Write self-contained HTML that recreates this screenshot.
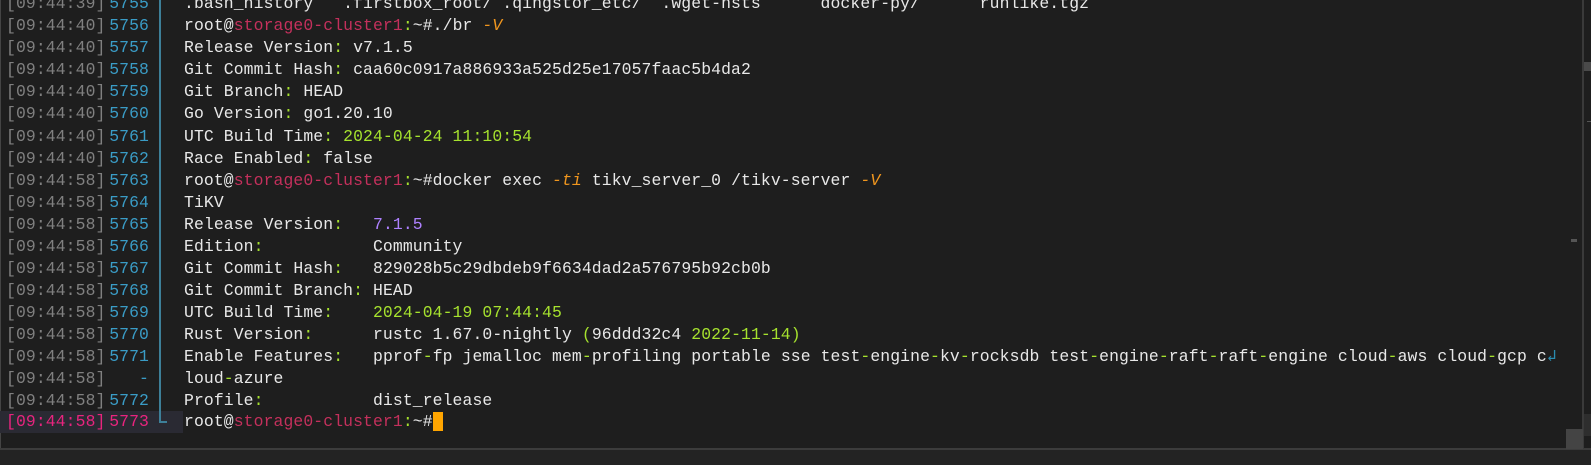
<!DOCTYPE html>
<html><head><meta charset="utf-8"><style>
html,body{margin:0;padding:0;}
body{width:1591px;height:465px;background:#1e1e1e;position:relative;overflow:hidden;font-family:"Liberation Mono",monospace;font-size:16.4px;letter-spacing:0.11px;color:#e8e8e8;}
.r{position:absolute;left:0;height:22px;line-height:22px;white-space:pre;width:1560px;}
.ts{position:absolute;left:6px;color:#808080;}
.n{position:absolute;left:100px;width:49px;text-align:right;color:#3a9cc6;}
.t{position:absolute;left:184px;}
.h{color:#c4305c}.g{color:#a6e22e}.o{color:#f0961e;font-style:italic}.p{color:#ae81ff}
.cur .ts,.cur .n{color:#e8247e}
</style></head><body>
<div style="position:absolute;left:0;top:0;width:1px;height:449px;background:#444"></div>
<div style="position:absolute;left:0;top:448px;width:1591px;height:2px;background:#3c3c3c"></div>
<div style="position:absolute;left:0;top:450px;width:1591px;height:15px;background:#232323"></div>
<div style="position:absolute;left:1582px;top:0;width:2px;height:449px;background:#3a3a3a"></div>
<div style="position:absolute;left:1584px;top:62px;width:7px;height:9px;background:#4a4a4a"></div>
<div style="position:absolute;left:1587px;top:121px;width:4px;height:1px;background:#555"></div>
<div style="position:absolute;left:1571px;top:239px;width:6px;height:3px;background:#555"></div>
<div style="position:absolute;left:1566px;top:429px;width:17px;height:20px;background:#444"></div>
<div style="position:absolute;left:1584px;top:414px;width:7px;height:22px;background:#2e2e2e"></div>
<div style="position:absolute;left:0;top:411px;width:183px;height:22px;background:#2a2a33"></div>
<div style="position:absolute;left:159px;top:0;width:2px;height:423px;background:#3d7f98"></div>
<div style="position:absolute;left:159px;top:421px;width:8px;height:2px;background:#3d7f98"></div>

<div class="r" style="top:-7px"><span class="ts">[09:44:39]</span><span class="n">5755</span><span class="t">.bash_history   .firstbox_root/ .qingstor_etc/  .wget-hsts      docker-py/      runlike.tgz</span></div>
<div class="r" style="top:15px"><span class="ts">[09:44:40]</span><span class="n">5756</span><span class="t">root@<span class="h">storage0-cluster1</span><span class="g">:</span>~#./br <span class="o">-V</span></span></div>
<div class="r" style="top:37px"><span class="ts">[09:44:40]</span><span class="n">5757</span><span class="t">Release Version<span class="g">:</span> v7.1.5</span></div>
<div class="r" style="top:59px"><span class="ts">[09:44:40]</span><span class="n">5758</span><span class="t">Git Commit Hash<span class="g">:</span> caa60c0917a886933a525d25e17057faac5b4da2</span></div>
<div class="r" style="top:81px"><span class="ts">[09:44:40]</span><span class="n">5759</span><span class="t">Git Branch<span class="g">:</span> HEAD</span></div>
<div class="r" style="top:103px"><span class="ts">[09:44:40]</span><span class="n">5760</span><span class="t">Go Version<span class="g">:</span> go1.20.10</span></div>
<div class="r" style="top:126px"><span class="ts">[09:44:40]</span><span class="n">5761</span><span class="t">UTC Build Time<span class="g">: 2024-04-24 11:10:54</span></span></div>
<div class="r" style="top:148px"><span class="ts">[09:44:40]</span><span class="n">5762</span><span class="t">Race Enabled<span class="g">:</span> false</span></div>
<div class="r" style="top:170px"><span class="ts">[09:44:58]</span><span class="n">5763</span><span class="t">root@<span class="h">storage0-cluster1</span><span class="g">:</span>~#docker exec <span class="o">-ti</span> tikv_server_0 /tikv-server <span class="o">-V</span></span></div>
<div class="r" style="top:192px"><span class="ts">[09:44:58]</span><span class="n">5764</span><span class="t">TiKV</span></div>
<div class="r" style="top:214px"><span class="ts">[09:44:58]</span><span class="n">5765</span><span class="t">Release Version<span class="g">:</span>   <span class="p">7.1.5</span></span></div>
<div class="r" style="top:236px"><span class="ts">[09:44:58]</span><span class="n">5766</span><span class="t">Edition<span class="g">:</span>           Community</span></div>
<div class="r" style="top:258px"><span class="ts">[09:44:58]</span><span class="n">5767</span><span class="t">Git Commit Hash<span class="g">:</span>   829028b5c29dbdeb9f6634dad2a576795b92cb0b</span></div>
<div class="r" style="top:280px"><span class="ts">[09:44:58]</span><span class="n">5768</span><span class="t">Git Commit Branch<span class="g">:</span> HEAD</span></div>
<div class="r" style="top:302px"><span class="ts">[09:44:58]</span><span class="n">5769</span><span class="t">UTC Build Time<span class="g">:    2024-04-19 07:44:45</span></span></div>
<div class="r" style="top:324px"><span class="ts">[09:44:58]</span><span class="n">5770</span><span class="t">Rust Version<span class="g">:</span>      rustc 1.67.0-nightly <span class="g">(</span>96ddd32c4 <span class="g">2022-11-14)</span></span></div>
<div class="r" style="top:346px"><span class="ts">[09:44:58]</span><span class="n">5771</span><span class="t">Enable Features<span class="g">:</span>   pprof<span class="g">-</span>fp jemalloc mem<span class="g">-</span>profiling portable sse test<span class="g">-</span>engine<span class="g">-</span>kv<span class="g">-</span>rocksdb test<span class="g">-</span>engine<span class="g">-</span>raft<span class="g">-</span>raft<span class="g">-</span>engine cloud<span class="g">-</span>aws cloud<span class="g">-</span>gcp c<span style="color:#2a8cb0">↲</span></span></div>
<div class="r" style="top:368px"><span class="ts">[09:44:58]</span><span class="n">-</span><span class="t">loud<span class="g">-</span>azure</span></div>
<div class="r" style="top:390px"><span class="ts">[09:44:58]</span><span class="n">5772</span><span class="t">Profile<span class="g">:</span>           dist_release</span></div>
<div class="r cur" style="top:411px"><span class="ts">[09:44:58]</span><span class="n">5773</span><span class="t">root@<span class="h">storage0-cluster1</span><span class="g">:</span>~#<span style="background:#ffa500;color:#ffa500"> </span></span></div>
</body></html>
